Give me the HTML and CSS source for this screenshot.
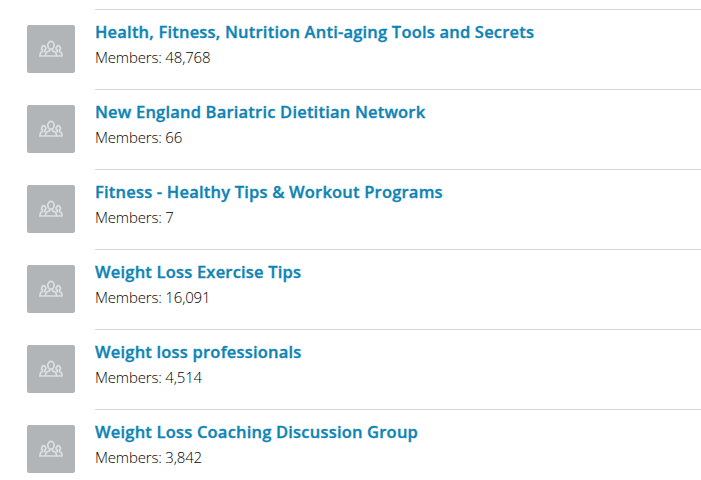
FILE: index.html
```html
<!DOCTYPE html>
<html lang="en">
<head>
    <meta charset="utf-8">
    <title>Groups</title>
    <link rel="stylesheet" href="styles.css">
</head>
<body>
    <svg class="defs" width="0" height="0">
        <symbol id="people" viewBox="0 0 24 18">
            <ellipse cx="12" cy="5.2" rx="3.2" ry="3.9"/>
            <path d="M10.5 9v2L7.800 12Q6.500 12.800 6.500 16h11Q17.500 12.800 16.200 12L13.500 11V9"/>
            <path d="M6.500 12L5.800 11.500V10.500a2 2.700 0 1 0-2.200 0v1L1.900 12.500Q1 13.300 1 16H6.500"/>
            <path d="M17.500 12L18.200 11.500V10.500a2 2.700 0 1 1 2.200 0v1L22.100 12.500Q23 13.300 23 16H17.500"/>
        </symbol>
    </svg>

    <ul class="groups">
        <li class="group">
            <div class="logo"><svg><use href="#people"/></svg></div>
            <div class="info">
                <h3>Health, Fitness, Nutrition Anti-aging Tools and Secrets</h3>
                <p>Members: 48,768</p>
            </div>
        </li>
        <li class="group">
            <div class="logo"><svg><use href="#people"/></svg></div>
            <div class="info">
                <h3>New England Bariatric Dietitian Network</h3>
                <p>Members: 66</p>
            </div>
        </li>
        <li class="group">
            <div class="logo"><svg><use href="#people"/></svg></div>
            <div class="info">
                <h3>Fitness - Healthy Tips &amp; Workout Programs</h3>
                <p>Members: 7</p>
            </div>
        </li>
        <li class="group">
            <div class="logo"><svg><use href="#people"/></svg></div>
            <div class="info">
                <h3>Weight Loss Exercise Tips</h3>
                <p>Members: 16,091</p>
            </div>
        </li>
        <li class="group">
            <div class="logo"><svg><use href="#people"/></svg></div>
            <div class="info">
                <h3>Weight loss professionals</h3>
                <p>Members: 4,514</p>
            </div>
        </li>
        <li class="group">
            <div class="logo"><svg><use href="#people"/></svg></div>
            <div class="info">
                <h3>Weight Loss Coaching Discussion Group</h3>
                <p>Members: 3,842</p>
            </div>
        </li>
    </ul>
</body>
</html>
```
FILE: styles.css
```css
body {
    margin: 0;
    background-color: #fff;
    font-family: "Open Sans", "Noto Sans", sans-serif;
    overflow: hidden;
}

.defs {
    display: block;
}

.groups {
    list-style: none;
    margin: 0;
    padding: 9px 0 0 27px;
}

.group {
    display: flex;
    gap: 20px;
    height: 80px;
}

.logo {
    display: flex;
    justify-content: center;
    align-items: center;
    width: 48px;
    height: 48px;
    margin-top: 16px;
    background-color: #b1b5b8;
    border-radius: 2px;
}

.logo svg {
    width: 24px;
    height: 18px;
    fill: none;
    stroke: #dcdedf;
    stroke-width: 1.7;
}

.info {
    flex: 1;
    border-top: 1px solid #d5d5d5;
}

.info h3 {
    margin: 10px 0 0;
    color: #0e84b5;
    font-size: 16.5px;
    line-height: 24px;
    font-weight: 600;
    letter-spacing: 0.2px;
    -webkit-text-stroke: 0.35px #0e84b5;
    white-space: nowrap;
}

.info p {
    margin: 3px 0 0;
    color: #000;
    font-size: 15px;
    line-height: 20px;
    font-weight: 300;
    letter-spacing: -0.17px;
}
```
